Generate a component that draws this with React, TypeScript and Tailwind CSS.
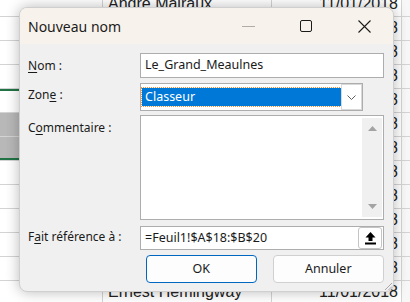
import React from 'react';

const sheetRows = [
  'André Malraux',
  'Albert Camus',
  'Marcel Proust',
  'Victor Hugo',
  'Alain-Fournier',
  'Jules Verne',
  'Émile Zola',
  'George Sand',
  'Colette',
  'Gustave Flaubert',
  'Honoré de Balzac',
  'Stendhal',
  'Ernest Hemingway',
];

function Sheet() {
  return (
    <div className="mt-[-7px] w-[410px] bg-white font-['Liberation_Sans',sans-serif] text-[16px] text-[#222]">
      {sheetRows.map((name, i) => {
        const active = i === 4;
        const grey = i === 5 || i === 6;
        const greenTop = active ? 'shadow-[inset_0_2px_0_#217346]' : '';
        const greenBottom = i === 6 ? 'shadow-[inset_0_-2px_0_#217346]' : '';
        return (
          <div key={i} className="flex h-[24px] border-b border-[#d4d4d4]">
            <div
              className={`w-[103px] shrink-0 border-r border-[#d4d4d4] ${
                grey ? 'bg-[#b8b8b8]' : ''
              } ${greenTop} ${greenBottom}`}
            ></div>
            <div
              className={`flex w-[169px] shrink-0 items-end border-r border-[#d4d4d4] pl-[5px] ${
                grey ? 'bg-[#b8b8b8]' : ''
              } ${greenTop} ${greenBottom}`}
            >
              {name}
            </div>
            <div className="flex w-[130px] shrink-0 items-end justify-end border-r border-[#d4d4d4] pr-[3px]">
              11/01/2018
            </div>
            <div className="flex-1 bg-[#f7f7f7]"></div>
          </div>
        );
      })}
    </div>
  );
}

function UploadIcon() {
  return (
    <svg width="11" height="13" viewBox="0 0 11 13">
      <polygon points="5.5,0 10.5,5.5 7.5,5.5 7.5,9 3.5,9 3.5,5.5 0.5,5.5" fill="#000" />
      <rect x="0" y="10.5" width="11" height="2" fill="#000" />
    </svg>
  );
}

function Dialog() {
  return (
    <div className="absolute left-[19px] top-[7px] flex h-[285px] w-[375px] flex-col overflow-hidden rounded-[8px] border border-[#cfcfcf] bg-[#f0f0f0] font-['Noto_Sans',sans-serif] text-[12px] text-[#1a1a1a] shadow-[0_0_14px_rgba(0,0,0,0.28)]">
      {/* title bar */}
      <div className="flex h-[36px] shrink-0 items-center bg-[#f8f2ec]">
        <span className="pl-[8px] text-[14px] text-[#1b1b1b]">Nouveau nom</span>
        <div className="ml-auto flex h-full">
          <div className="flex w-[58px] items-center justify-center">
            <div className="h-px w-[13px] bg-[#b0aca8]"></div>
          </div>
          <div className="flex w-[58px] items-center justify-center">
            <div className="h-[12px] w-[12px] rounded-[2px] border border-[#1b1b1b]"></div>
          </div>
          <div className="flex w-[58px] items-center justify-center">
            <svg width="13" height="13" viewBox="0 0 13 13">
              <path d="M0.5 0.5 L12.5 12.5 M12.5 0.5 L0.5 12.5" stroke="#1b1b1b" strokeWidth="1.1" />
            </svg>
          </div>
        </div>
      </div>

      {/* body */}
      <div className="flex flex-col pl-[8px] pr-[9px] pt-[9px]">
        <div className="flex items-center">
          <label className="w-[112px] shrink-0">
            <span className="underline underline-offset-2">N</span>om :
          </label>
          <div className="flex h-[25px] w-[246px] items-center border border-[#adadad] bg-white pl-[4px] text-[12.5px]">
            Le_Grand_Meaulnes
          </div>
        </div>

        <div className="mt-[5px] flex items-start">
          <label className="w-[112px] shrink-0 pt-[3px]">
            Zon<span className="underline underline-offset-2">e</span> :
          </label>
          <div className="flex h-[28px] w-[223px] border border-[#adadad] bg-white">
            <div className="flex-1 py-[4px] pl-[1px]">
              <div className="flex h-full items-center bg-[#0078d7] pl-[3px] text-[12.5px] text-white outline outline-1 outline-dotted outline-[#e8944a]">
                Classeur
              </div>
            </div>
            <div className="flex w-[21px] items-center justify-center border border-[#d8d8d8] bg-white">
              <svg width="9" height="5" viewBox="0 0 9 5">
                <path d="M0.5 0.5 L4.5 4.5 L8.5 0.5" stroke="#606060" fill="none" strokeWidth="1" />
              </svg>
            </div>
          </div>
        </div>

        <div className="mt-[4px] flex items-start">
          <label className="w-[112px] shrink-0 pt-[4px]">
            C<span className="underline underline-offset-2">o</span>mmentaire :
          </label>
          <div className="flex h-[105px] w-[246px] justify-end border border-[#adadad] bg-white p-[2px] pr-px">
            <div className="flex w-[20px] flex-col items-center justify-between bg-[#f0f0f0] py-[8px]">
              <svg width="9" height="5" viewBox="0 0 9 5">
                <polygon points="4.5,0 9,5 0,5" fill="#a3a3a3" />
              </svg>
              <svg width="9" height="5" viewBox="0 0 9 5">
                <polygon points="0,0 9,0 4.5,5" fill="#a3a3a3" />
              </svg>
            </div>
          </div>
        </div>

        <div className="mt-[6px] flex items-center">
          <label className="w-[112px] shrink-0 pb-[2px]">
            F<span className="underline underline-offset-2">a</span>it référence à :
          </label>
          <div className="flex h-[24px] w-[246px] items-center border border-[#adadad] bg-white pl-[4px] text-[12.5px]">
            <span className="flex-1">=Feuil1!$A$18:$B$20</span>
            <div className="mr-px flex h-[22px] w-[24px] items-center justify-center rounded-[3px] border border-[#c4c4c4] bg-white">
              <UploadIcon />
            </div>
          </div>
        </div>

        <div className="mt-[5px] flex pl-[118px]">
          <button className="h-[28px] w-[111px] rounded-[4px] border border-[#0067c0] bg-[#fdfdfd] text-[12.5px] text-[#1a1a1a]">
            OK
          </button>
          <button className="ml-[16px] h-[28px] w-[112px] rounded-[4px] border border-[#d0d0d0] bg-[#fdfdfd] text-[12.5px] text-[#1a1a1a]">
            Annuler
          </button>
        </div>
      </div>

      {/* resize grip */}
      <svg className="absolute bottom-[1px] right-[1px]" width="7" height="7" viewBox="0 0 7 7">
        <path d="M7 0 L0 7 M7 3.5 L3.5 7" stroke="#a8a8a8" strokeWidth="1" />
      </svg>
    </div>
  );
}

export default function App() {
  return (
    <div className="relative h-[302px] w-[410px] overflow-hidden bg-white">
      <Sheet />
      <Dialog />
    </div>
  );
}
